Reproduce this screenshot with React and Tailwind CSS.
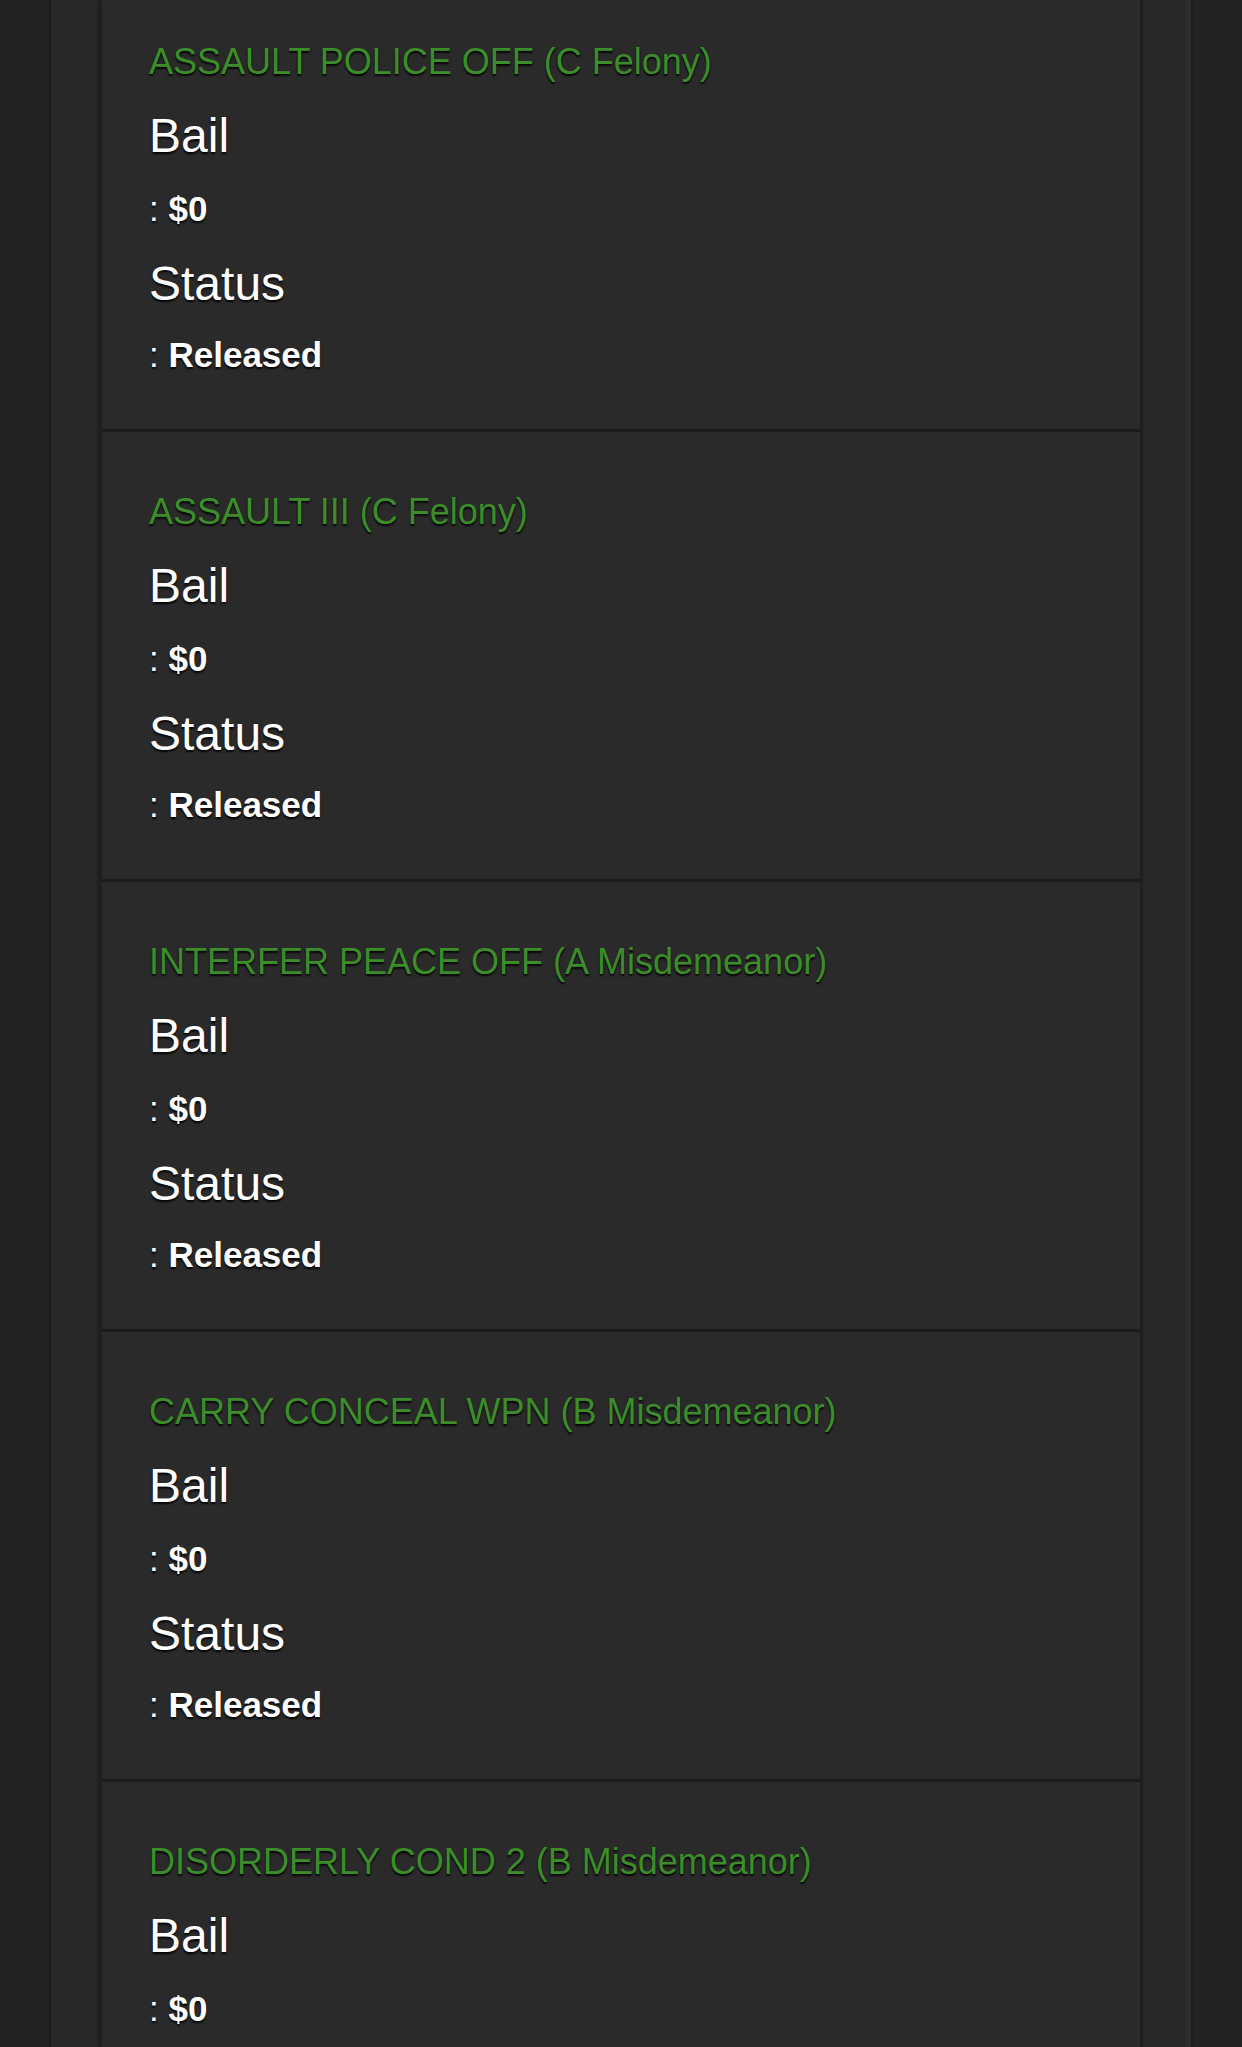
import React from "react";

const charges = [
  { title: "ASSAULT POLICE OFF (C Felony)", bail: "$0", status: "Released" },
  { title: "ASSAULT III (C Felony)", bail: "$0", status: "Released" },
  { title: "INTERFER PEACE OFF (A Misdemeanor)", bail: "$0", status: "Released" },
  { title: "CARRY CONCEAL WPN (B Misdemeanor)", bail: "$0", status: "Released" },
  { title: "DISORDERLY COND 2 (B Misdemeanor)", bail: "$0", status: "Released" },
];

function Charge({ charge, first }) {
  return (
    <div
      className={
        "border-b-[3px] border-[#1c1c1c] pl-[47px] pb-[53px] " +
        (first ? "pt-[40px]" : "pt-[58px]")
      }
    >
      <div className="text-[36px] leading-[44px] text-[#3c8d2a] [text-shadow:0_2px_2px_rgba(0,0,0,0.9)]">
        {charge.title}
      </div>

      <div className="mt-6 text-[48px] leading-[56px] text-white [text-shadow:0_2px_2px_rgba(0,0,0,0.9)]">
        Bail
      </div>
      <div className="mt-6 text-[35px] leading-[42px] text-white [text-shadow:0_2px_2px_rgba(0,0,0,0.9)]">
        : <span className="font-bold">{charge.bail}</span>
      </div>

      <div className="mt-[26px] text-[48px] leading-[56px] text-white [text-shadow:0_2px_2px_rgba(0,0,0,0.9)]">
        Status
      </div>
      <div className="mt-[22px] text-[35px] leading-[42px] text-white [text-shadow:0_2px_2px_rgba(0,0,0,0.9)]">
        : <span className="font-bold">{charge.status}</span>
      </div>
    </div>
  );
}

export default function App() {
  return (
    <div className="h-[2047px] overflow-hidden bg-[#232323] font-['Liberation_Sans',Arial,sans-serif]">
      <div className="flex h-full">
        <div className="w-[49px] shrink-0" />

        <div className="w-[50px] shrink-0 border-l-2 border-[#1d1d1d] bg-[#282828]" />

        <div className="flex-1 border-x-[3px] border-[#1f1f1f] bg-[#2a2a2a] shadow-[0_0_4px_rgba(0,0,0,0.5)]">
          {charges.map((c, i) => (
            <Charge key={i} charge={c} first={i === 0} />
          ))}
        </div>

        <div className="w-[48px] shrink-0 border-r-[5px] border-[#2e2e2e] bg-[#282828]" />

        <div className="w-[51px] shrink-0 border-l-2 border-[#1d1d1d]" />
      </div>
    </div>
  );
}
